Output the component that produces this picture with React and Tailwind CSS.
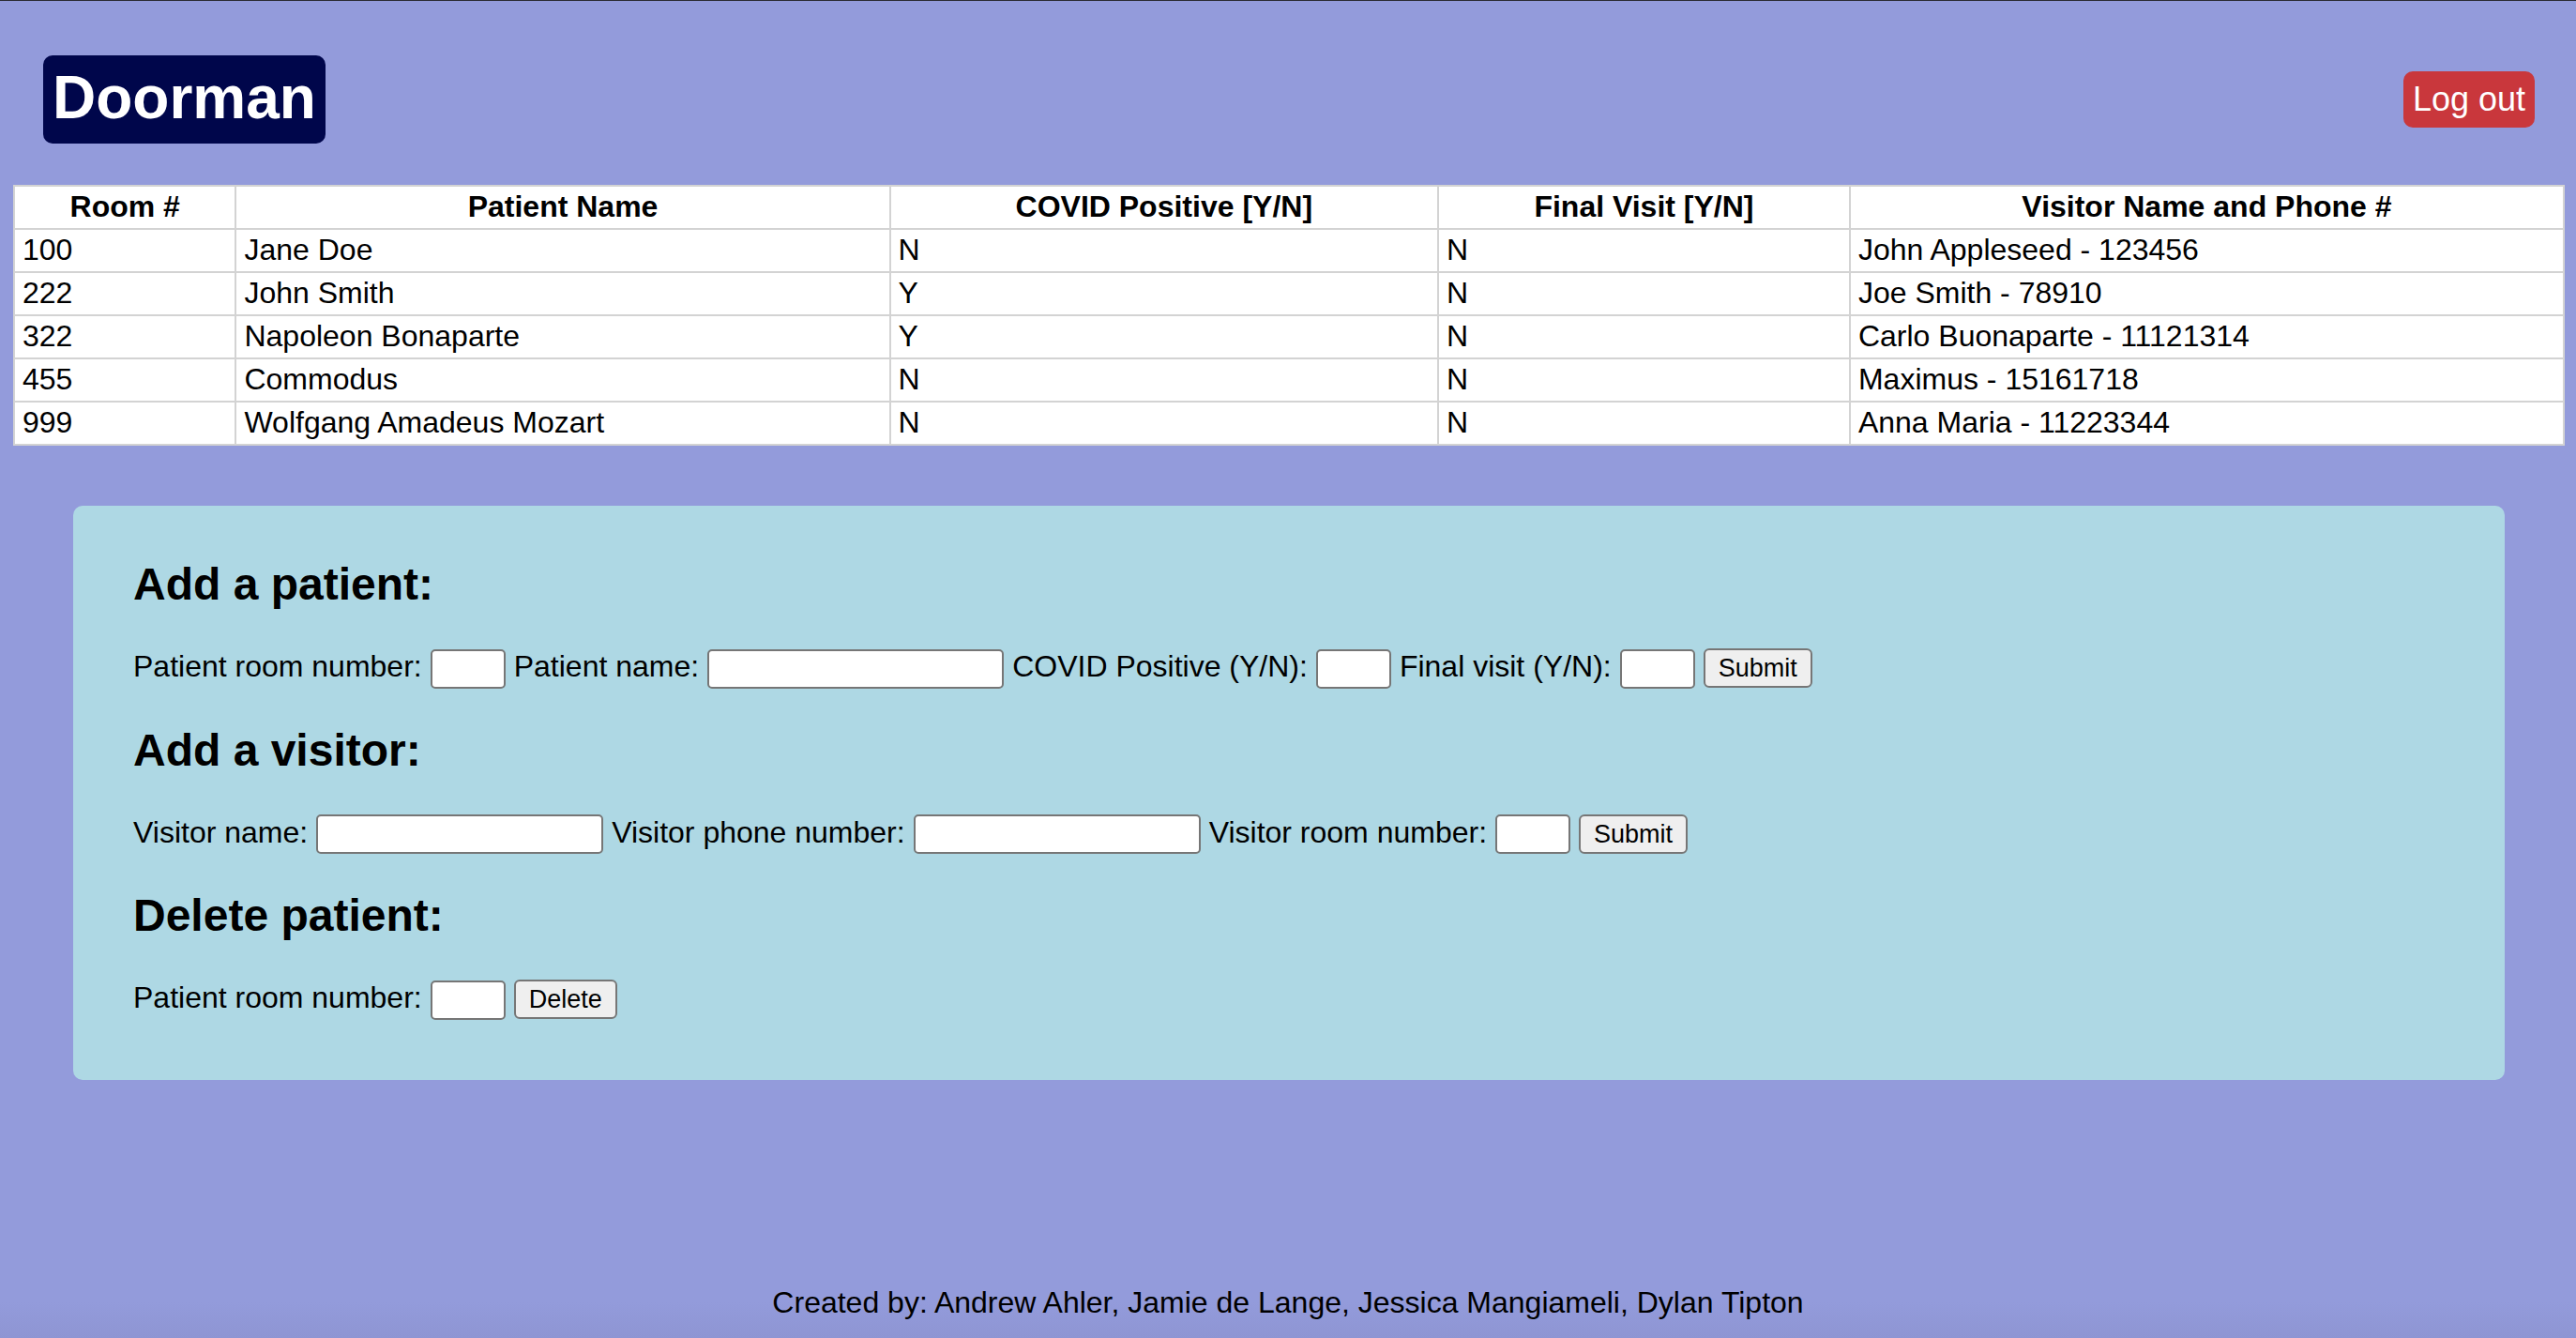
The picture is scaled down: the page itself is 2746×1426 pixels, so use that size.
const columns = [
  { name: "Room #", width: "w-[8.7%]" },
  { name: "Patient Name", width: "w-[25.65%]" },
  { name: "COVID Positive [Y/N]", width: "w-[21.5%]" },
  { name: "Final Visit [Y/N]", width: "w-[16.15%]" },
  { name: "Visitor Name and Phone #", width: "w-[28%]" },
];

const patients = [
  ["100", "Jane Doe", "N", "N", "John Appleseed - 123456"],
  ["222", "John Smith", "Y", "N", "Joe Smith - 78910"],
  ["322", "Napoleon Bonaparte", "Y", "N", "Carlo Buonaparte - 11121314"],
  ["455", "Commodus", "N", "N", "Maximus - 15161718"],
  ["999", "Wolfgang Amadeus Mozart", "N", "N", "Anna Maria - 11223344"],
];

function Field({ id, label, width }) {
  return (
    <>
      <label htmlFor={id}>{label}</label>
      <input
        id={id}
        type="text"
        className={`h-[42px] rounded-[5px] border-2 border-[#767676] bg-white px-1 text-[27px] ${width}`}
      />
    </>
  );
}

function FormSection({ title, action, children }) {
  return (
    <section>
      <h2 className="text-[48px] leading-[56px] font-bold">{title}</h2>
      <form
        className="mt-10 flex flex-wrap items-baseline gap-x-[9px]"
        onSubmit={(event) => event.preventDefault()}
      >
        {children}
        <button
          type="submit"
          className="h-[42px] rounded-[6px] border-2 border-[#767676] bg-[#efefef] px-[14px] text-[27px] leading-[38px]"
        >
          {action}
        </button>
      </form>
    </section>
  );
}

export default function App() {
  return (
    <div className="flex min-h-screen flex-col border-t border-[#2b2b33] bg-[#939bdb] font-['Liberation_Sans',Arial,sans-serif] text-[32px] leading-9 text-black">
      <header className="flex items-center justify-between pt-[58px] pr-11 pb-11 pl-[46px]">
        <h1 className="rounded-[10px] bg-[#00064b] px-[10px] pt-2 pb-3 text-[64px] leading-[74px] font-bold text-white">
          Doorman
        </h1>
        <a
          href="#logout"
          className="rounded-[10px] bg-[#c9373c] p-[10px] text-[36px] leading-10 text-white"
        >
          Log out
        </a>
      </header>

      <main className="flex-1">
        <div className="pr-3 pl-[14px]">
          <table className="w-full border-collapse bg-white">
            <thead>
              <tr>
                {columns.map(({ name, width }) => (
                  <th
                    key={name}
                    scope="col"
                    className={`border-2 border-[#d3d3d3] px-2 pt-[3px] pb-[5px] text-center font-bold ${width}`}
                  >
                    {name}
                  </th>
                ))}
              </tr>
            </thead>
            <tbody>
              {patients.map((row) => (
                <tr key={row[0]}>
                  {row.map((cell, index) => (
                    <td
                      key={index}
                      className="border-2 border-[#d3d3d3] px-2 pt-[3px] pb-[5px]"
                    >
                      {cell}
                    </td>
                  ))}
                </tr>
              ))}
            </tbody>
          </table>
        </div>

        <div className="mt-16 mr-[76px] ml-[78px] flex flex-col gap-[38px] rounded-[10px] bg-[#aed8e4] px-16 pt-14 pb-16">
          <FormSection title="Add a patient:" action="Submit">
            <Field id="patient-room" label="Patient room number:" width="w-20" />
            <Field id="patient-name" label="Patient name:" width="w-[316px]" />
            <Field id="patient-covid" label="COVID Positive (Y/N):" width="w-20" />
            <Field id="patient-final" label="Final visit (Y/N):" width="w-20" />
          </FormSection>
          <FormSection title="Add a visitor:" action="Submit">
            <Field id="visitor-name" label="Visitor name:" width="w-[306px]" />
            <Field id="visitor-phone" label="Visitor phone number:" width="w-[306px]" />
            <Field id="visitor-room" label="Visitor room number:" width="w-20" />
          </FormSection>
          <FormSection title="Delete patient:" action="Delete">
            <Field id="delete-room" label="Patient room number:" width="w-20" />
          </FormSection>
        </div>
      </main>

      <footer className="bg-linear-to-b from-[#939bdb] from-60% to-[#8e95d3] pt-10 pb-5 text-center">
        Created by: Andrew Ahler, Jamie de Lange, Jessica Mangiameli, Dylan Tipton
      </footer>
    </div>
  );
}
